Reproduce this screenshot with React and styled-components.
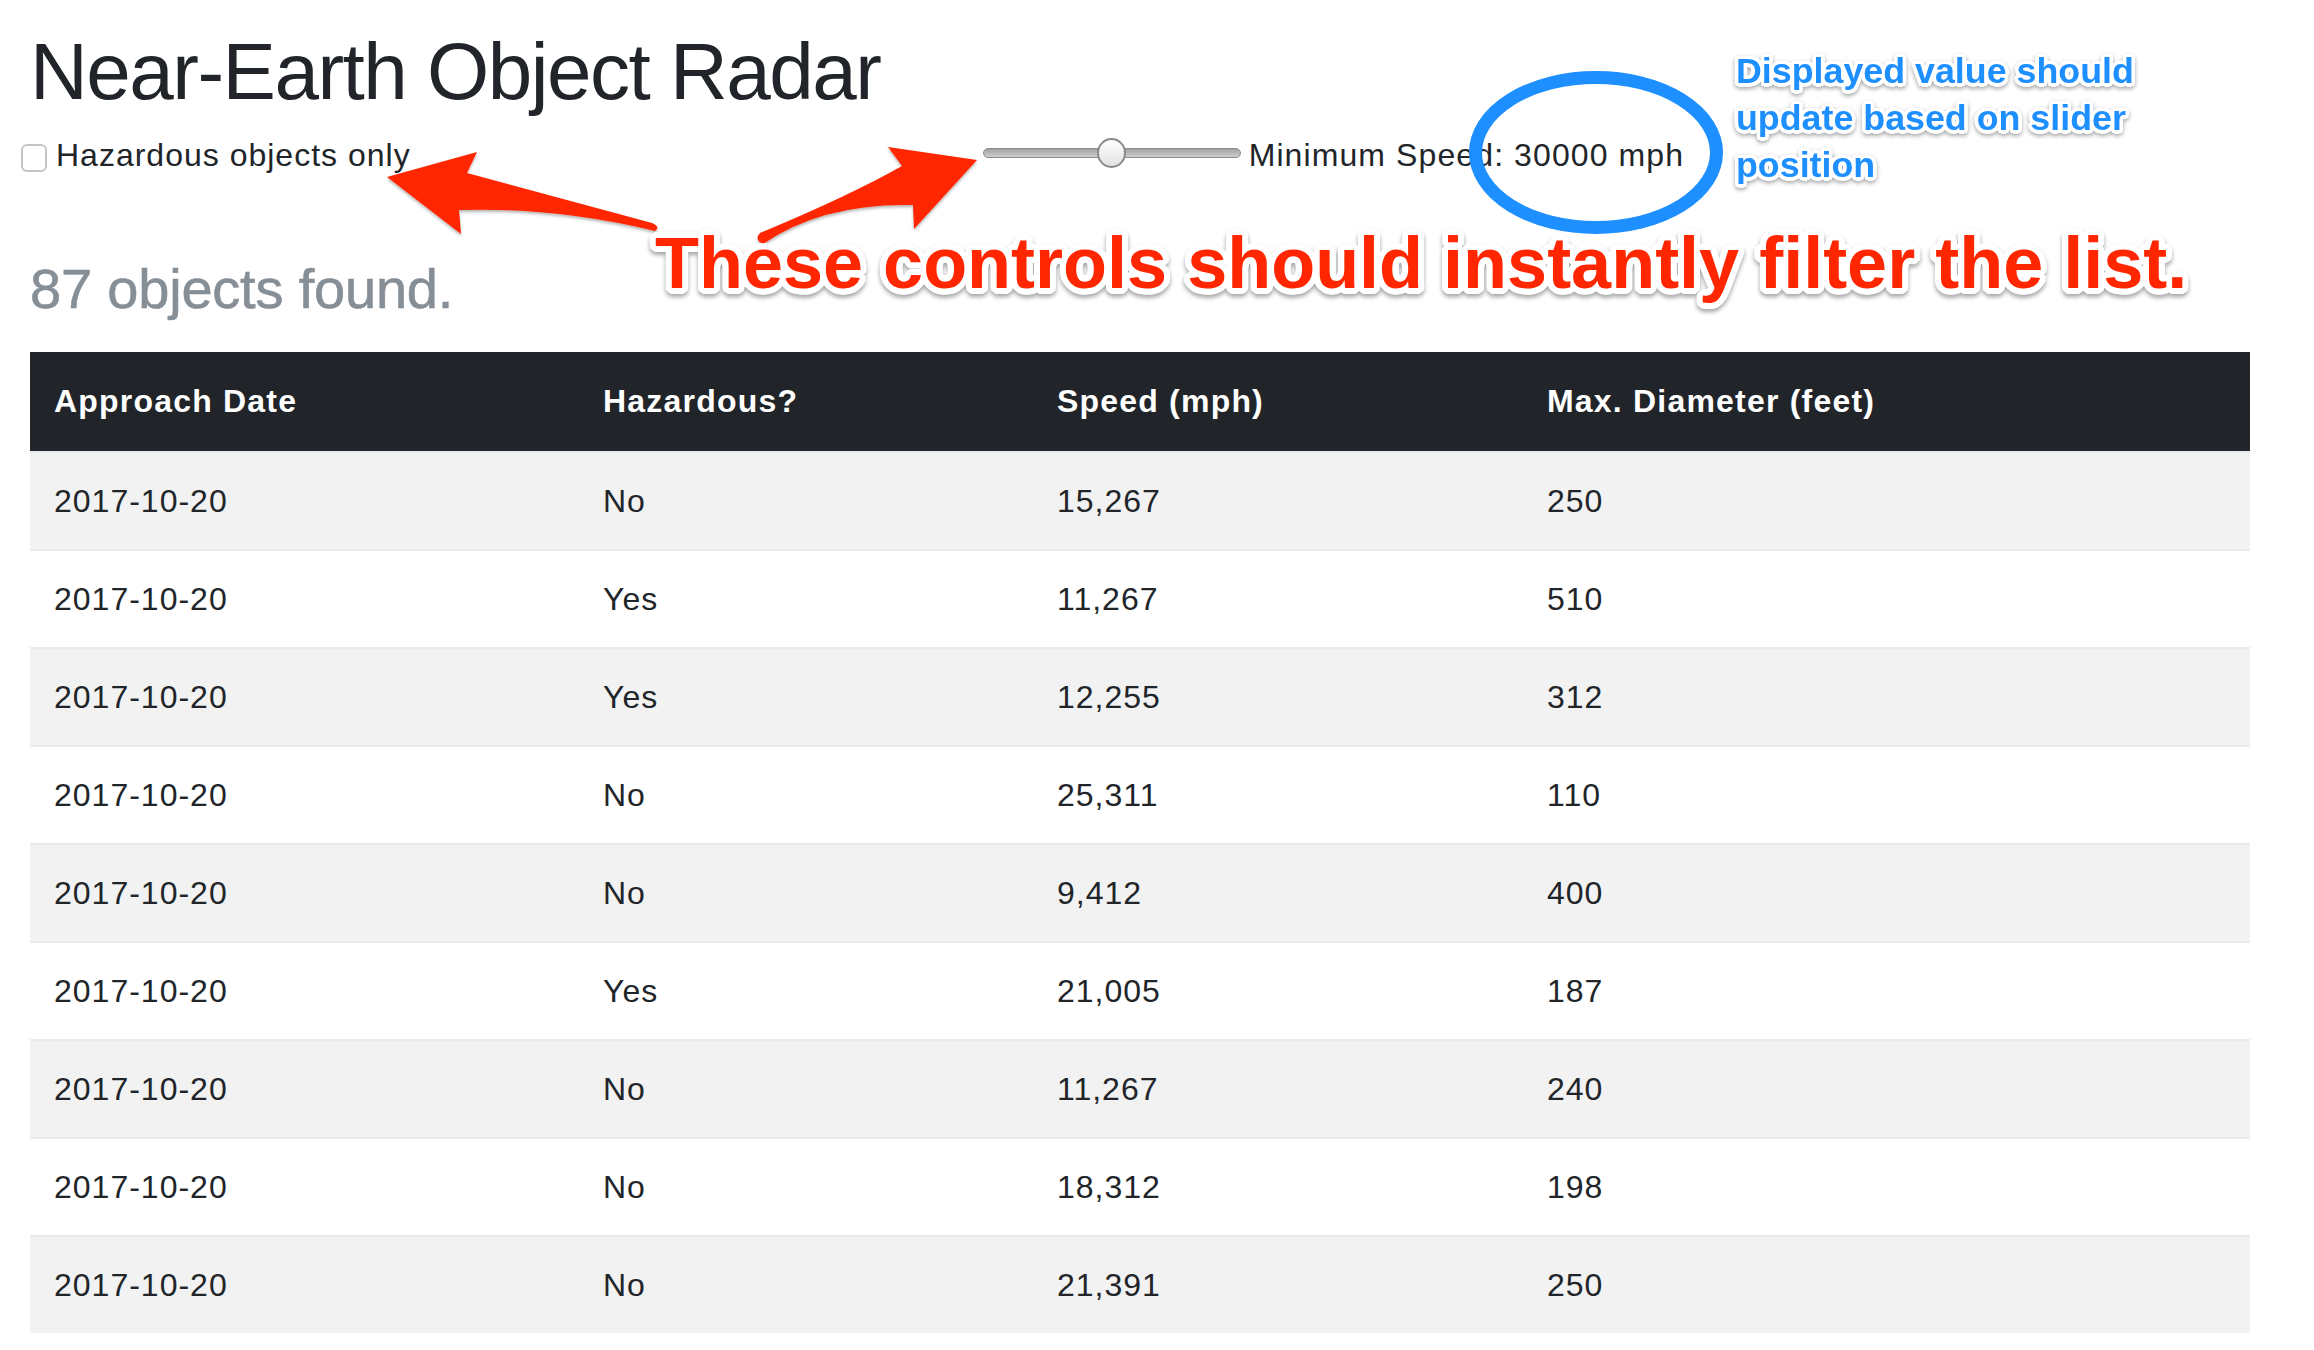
import React from 'react';
import styled, { createGlobalStyle } from 'styled-components';

const ring = (r, color, steps = 24) =>
  Array.from({ length: steps }, (_, i) => {
    const a = (i / steps) * Math.PI * 2;
    return `${(Math.cos(a) * r).toFixed(1)}px ${(Math.sin(a) * r).toFixed(1)}px 0 ${color}`;
  }).join(', ');

const GlobalStyle = createGlobalStyle`
  *, *::before, *::after {
    box-sizing: border-box;
  }
  body {
    margin: 0;
    background: #fff;
    color: #212529;
    font-family: "Liberation Sans", Arial, sans-serif;
    font-size: 32px;
    line-height: 1.5;
  }
`;

const Page = styled.div`
  position: relative;
  padding: 28px 64px 0 30px;
  overflow: hidden;
  height: 1350px;
`;

const Title = styled.h1`
  margin: 0 0 15px;
  font-size: 80px;
  font-weight: 400;
  line-height: 1.1;
  letter-spacing: -1.5px;
  color: #212529;
`;

const Controls = styled.div`
  display: flex;
  align-items: flex-start;
  height: 48px;
`;

const CheckLabel = styled.label`
  display: flex;
  align-items: flex-start;
  margin-left: -9px;
  letter-spacing: 1px;
`;

const Checkbox = styled.input.attrs({ type: 'checkbox' })`
  appearance: none;
  -webkit-appearance: none;
  width: 26px;
  height: 28px;
  margin: 13px 9px 0 0;
  border: 2px solid #c4c4c4;
  border-radius: 6px;
  background: #fff;
`;

const SliderGroup = styled.div`
  display: flex;
  align-items: flex-start;
  margin-left: 572px;
`;

const Slider = styled.input.attrs({ type: 'range' })`
  -webkit-appearance: none;
  appearance: none;
  width: 258px;
  height: 30px;
  margin: 7px 8px 0 0;
  background: transparent;

  &::-webkit-slider-runnable-track {
    height: 10px;
    border-radius: 5px;
    border: 1px solid #8d8d8d;
    background: linear-gradient(#a3a3a3, #cdcdcd);
  }
  &::-webkit-slider-thumb {
    -webkit-appearance: none;
    width: 29px;
    height: 30px;
    margin-top: -11px;
    border-radius: 50%;
    border: 2px solid #8a8a8a;
    background: linear-gradient(#ffffff, #e2e2e2);
  }
`;

const SpeedText = styled.span`
  letter-spacing: 1.1px;
`;

const Count = styled.h3`
  margin: 79px 0 32px;
  font-size: 56px;
  font-weight: 400;
  line-height: 1.1;
  letter-spacing: -0.2px;
  color: #868e96;
  -webkit-text-stroke: 0.6px #868e96;
`;

const Table = styled.table`
  width: 2220px;
  border-collapse: collapse;
  letter-spacing: 1px;
`;

const HeadCell = styled.th`
  width: ${(p) => p.$width}px;
  padding: 25px 24px 26px;
  text-align: left;
  font-weight: 700;
  line-height: 48px;
  letter-spacing: 1.2px;
  color: #fff;
  background: #212529;
`;

const Row = styled.tr`
  background: ${(p) => (p.$striped ? '#f2f2f2' : '#fff')};
`;

const Cell = styled.td`
  padding: 24px;
  line-height: 48px;
  border-top: 2px solid #e9ecef;
  color: #212529;
`;

const Callout = styled.div`
  position: absolute;
  left: 655px;
  top: 227px;
  font-size: 72px;
  font-weight: 700;
  line-height: 1;
  white-space: nowrap;
  color: #ff2600;
  text-shadow: ${ring(6, '#fff')};
  filter: drop-shadow(0 3px 2px rgba(0, 0, 0, 0.35));
`;

const Note = styled.div`
  position: absolute;
  left: 1736px;
  top: 48px;
  width: 450px;
  font-size: 35.8px;
  font-weight: 700;
  line-height: 47px;
  color: #1e8fff;
  text-shadow: ${ring(3.5, '#fff')};
  filter: drop-shadow(0 2px 2px rgba(0, 0, 0, 0.35));
`;

const Overlay = styled.svg`
  position: absolute;
  left: 0;
  top: 0;
  width: 2314px;
  height: 350px;
  pointer-events: none;
  overflow: visible;
`;

const rows = [
  ['No', '15,267', '250'],
  ['Yes', '11,267', '510'],
  ['Yes', '12,255', '312'],
  ['No', '25,311', '110'],
  ['No', '9,412', '400'],
  ['Yes', '21,005', '187'],
  ['No', '11,267', '240'],
  ['No', '18,312', '198'],
  ['No', '21,391', '250'],
];

const columns = [
  ['Approach Date', 549],
  ['Hazardous?', 454],
  ['Speed (mph)', 490],
  ['Max. Diameter (feet)', 727],
];

export default function App() {
  return (
    <>
      <GlobalStyle />
      <Page>
        <Title>Near-Earth Object Radar</Title>
        <Controls>
          <CheckLabel>
            <Checkbox />
            Hazardous objects only
          </CheckLabel>
          <SliderGroup>
            <Slider min={0} max={60000} defaultValue={30000} />
            <SpeedText>Minimum Speed: 30000 mph</SpeedText>
          </SliderGroup>
        </Controls>
        <Count>87 objects found.</Count>
        <Table>
          <thead>
            <tr>
              {columns.map(([label, w]) => (
                <HeadCell key={label} $width={w}>{label}</HeadCell>
              ))}
            </tr>
          </thead>
          <tbody>
            {rows.map(([haz, speed, dia], i) => (
              <Row key={i} $striped={i % 2 === 0}>
                <Cell>2017-10-20</Cell>
                <Cell>{haz}</Cell>
                <Cell>{speed}</Cell>
                <Cell>{dia}</Cell>
              </Row>
            ))}
          </tbody>
        </Table>

        <Overlay viewBox="0 0 2314 350">
          <defs>
            <filter id="shade" x="-10%" y="-10%" width="120%" height="130%">
              <feDropShadow dx="0" dy="2" stdDeviation="1.5" floodColor="#000" floodOpacity="0.3" />
            </filter>
          </defs>
          <g fill="#ff2600" filter="url(#shade)">
            <path d="M387,177 L477,152 L467,173 Q560,198 652,223 Q661,227 655,231 Q557,207 459,210 L461,234 Z" />
            <path d="M977,160 L888,147 L902,166 Q849,196 760,233 Q754,240 763,244 Q822,203 913,205 L914,229 Z" />
          </g>
          <ellipse cx="1596" cy="152.5" rx="120.5" ry="75" fill="none" stroke="#1e8fff" strokeWidth="13" />
        </Overlay>
        <Callout>These controls should instantly filter the list.</Callout>
        <Note>Displayed value should update based on slider position</Note>
      </Page>
    </>
  );
}
